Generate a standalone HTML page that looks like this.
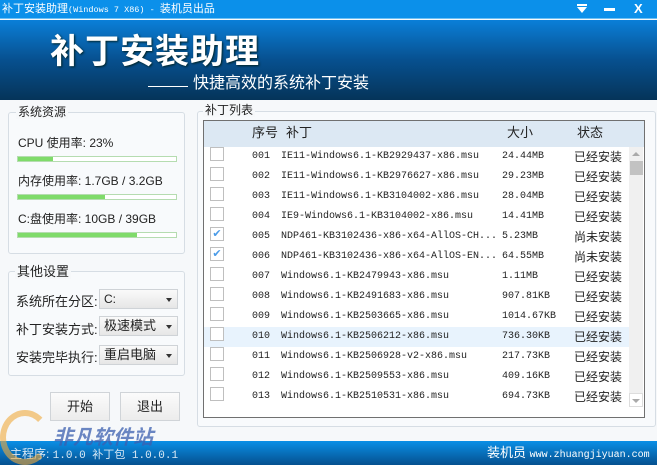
<!DOCTYPE html>
<html><head><meta charset="utf-8"><style>
*{margin:0;padding:0;box-sizing:border-box}
body{width:657px;height:465px;overflow:hidden;background:#f6f8fa;font-family:"Liberation Sans","Noto Sans CJK SC",sans-serif;font-size:12px;color:#222;position:relative}
.a{position:absolute}
.tb{left:0;top:0;width:657px;height:19px;background:#0b90ea;border-bottom:1px solid #6cc0f5;color:#fff;font-size:11px;line-height:18px;padding-left:2px;white-space:nowrap}
.ban{left:0;top:20px;width:657px;height:80px;background:linear-gradient(#0a7fd8,#07508f 50%,#053459)}
.gb{border:1px solid #d6dde4;border-radius:3px;background:#f8fafc}
.lg{background:#f6f8fa;padding:0 2px;font-size:12px;line-height:14px}
.bar{height:6px;border:1px solid #b5dcb0;background:#fff}
.bar i{display:block;height:100%;background:#7fdb6a}
.sel{width:79px;height:20px;border:1px solid #cfd3d7;background:linear-gradient(#fafafa,#e6e6e6);font-size:12px;line-height:18px;padding-left:4px}
.sel:after{content:"";position:absolute;right:5px;top:8px;border:3px solid transparent;border-top:4px solid #333}
.btn{width:60px;height:29px;border:1px solid #d0d4d8;background:linear-gradient(#fbfbfb,#ececec);text-align:center;line-height:27px;font-size:13px}
.row{left:204px;width:424px;height:20px;font-size:12px;line-height:20px}
.row span{position:absolute;top:0}
.m{font-family:"Liberation Mono",monospace;font-size:10px}
.cb{left:6px;top:3px;width:14px;height:14px;border:1px solid #bfbfbf;background:#fff}
.ck{color:#4a9be8;font-size:11px;line-height:12px;text-align:center}
</style></head><body>
<div class="a tb">补丁安装助理<span style="font-family:'Liberation Mono',monospace;font-size:8.5px">(Windows 7 X86) - </span>装机员出品</div>
<div class="a" style="left:577px;top:4px;width:10px;height:2px;background:#fff"></div>
<div class="a" style="left:577px;top:7px;border:5px solid transparent;border-top:6px solid #fff;border-bottom:0"></div>
<div class="a" style="left:604px;top:8px;width:11px;height:3px;background:#fff"></div>
<div class="a" style="left:634px;top:0;color:#fff;font-weight:bold;font-size:13px;line-height:18px">X</div>
<div class="a ban"></div>
<div class="a" style="left:50px;top:32px;color:#fff;font-size:34px;font-weight:bold;line-height:40px;letter-spacing:1px;text-shadow:1px 1px 2px #022">补丁安装助理</div>
<div class="a" style="left:148px;top:86px;width:40px;height:1px;background:#fff"></div>
<div class="a" style="left:193px;top:74px;color:#fff;font-size:16px;line-height:20px">快捷高效的系统补丁安装</div>

<div class="a gb" style="left:8px;top:112px;width:177px;height:142px"></div>
<div class="a lg" style="left:16px;top:105px">系统资源</div>
<div class="a" style="left:18px;top:134px">CPU 使用率: 23%</div>
<div class="a bar" style="left:17px;top:156px;width:160px"><i style="width:22%"></i></div>
<div class="a" style="left:18px;top:172px">内存使用率: 1.7GB / 3.2GB</div>
<div class="a bar" style="left:17px;top:194px;width:160px"><i style="width:55%"></i></div>
<div class="a" style="left:18px;top:210px">C:盘使用率: 10GB / 39GB</div>
<div class="a bar" style="left:17px;top:232px;width:160px"><i style="width:75%"></i></div>

<div class="a gb" style="left:8px;top:271px;width:177px;height:105px"></div>
<div class="a lg" style="left:15px;top:265px;font-size:13px">其他设置</div>
<div class="a" style="left:16px;top:291px;font-size:13px">系统所在分区:</div>
<div class="a sel" style="left:99px;top:289px">C:</div>
<div class="a" style="left:16px;top:319px;font-size:13px">补丁安装方式:</div>
<div class="a sel" style="left:99px;top:316px;font-size:13px">极速模式</div>
<div class="a" style="left:16px;top:347px;font-size:13px">安装完毕执行:</div>
<div class="a sel" style="left:99px;top:345px;font-size:13px">重启电脑</div>
<div class="a btn" style="left:50px;top:392px">开始</div>
<div class="a btn" style="left:120px;top:392px">退出</div>

<div class="a gb" style="left:197px;top:111px;width:459px;height:316px"></div>
<div class="a lg" style="left:203px;top:103px">补丁列表</div>
<div class="a" style="left:203px;top:120px;width:442px;height:298px;border:1px solid #707070;background:#fff"></div>
<div class="a" style="left:204px;top:121px;width:440px;height:26px;background:#dce8f3;font-size:13px;line-height:24px">
<span class="a" style="left:48px">序号</span><span class="a" style="left:82px">补丁</span><span class="a" style="left:303px">大小</span><span class="a" style="left:373px">状态</span></div>
<div class="a" style="left:629px;top:147px;width:14px;height:260px;background:#f0f0f0"></div>
<div class="a" style="left:630px;top:161px;width:13px;height:14px;background:#c2c2c2"></div>
<div class="a" style="left:632px;top:152px;border:4px solid transparent;border-bottom:4px solid #aaa;border-top:0"></div>
<div class="a" style="left:629px;top:393px;width:14px;height:14px;background:#fff;border:1px solid #ddd"></div>
<div class="a" style="left:632px;top:399px;border:4px solid transparent;border-top:4px solid #aaa;border-bottom:0"></div>
<div class="a" style="left:204px;top:327px;width:425px;height:20px;background:#e8f3fd"></div>

<div class="a row" style="top:147px"><span class="a cb"></span><span class="m" style="left:48px">001</span><span class="m" style="left:77px">IE11-Windows6.1-KB2929437-x86.msu</span><span class="m" style="left:298px">24.44MB</span><span style="left:370px">已经安装</span></div>
<div class="a row" style="top:167px"><span class="a cb"></span><span class="m" style="left:48px">002</span><span class="m" style="left:77px">IE11-Windows6.1-KB2976627-x86.msu</span><span class="m" style="left:298px">29.23MB</span><span style="left:370px">已经安装</span></div>
<div class="a row" style="top:187px"><span class="a cb"></span><span class="m" style="left:48px">003</span><span class="m" style="left:77px">IE11-Windows6.1-KB3104002-x86.msu</span><span class="m" style="left:298px">28.04MB</span><span style="left:370px">已经安装</span></div>
<div class="a row" style="top:207px"><span class="a cb"></span><span class="m" style="left:48px">004</span><span class="m" style="left:77px">IE9-Windows6.1-KB3104002-x86.msu</span><span class="m" style="left:298px">14.41MB</span><span style="left:370px">已经安装</span></div>
<div class="a row" style="top:227px"><span class="a cb ck">✔</span><span class="m" style="left:48px">005</span><span class="m" style="left:77px">NDP461-KB3102436-x86-x64-AllOS-CH...</span><span class="m" style="left:298px">5.23MB</span><span style="left:370px">尚未安装</span></div>
<div class="a row" style="top:247px"><span class="a cb ck">✔</span><span class="m" style="left:48px">006</span><span class="m" style="left:77px">NDP461-KB3102436-x86-x64-AllOS-EN...</span><span class="m" style="left:298px">64.55MB</span><span style="left:370px">尚未安装</span></div>
<div class="a row" style="top:267px"><span class="a cb"></span><span class="m" style="left:48px">007</span><span class="m" style="left:77px">Windows6.1-KB2479943-x86.msu</span><span class="m" style="left:298px">1.11MB</span><span style="left:370px">已经安装</span></div>
<div class="a row" style="top:287px"><span class="a cb"></span><span class="m" style="left:48px">008</span><span class="m" style="left:77px">Windows6.1-KB2491683-x86.msu</span><span class="m" style="left:298px">907.81KB</span><span style="left:370px">已经安装</span></div>
<div class="a row" style="top:307px"><span class="a cb"></span><span class="m" style="left:48px">009</span><span class="m" style="left:77px">Windows6.1-KB2503665-x86.msu</span><span class="m" style="left:298px">1014.67KB</span><span style="left:370px">已经安装</span></div>
<div class="a row" style="top:327px"><span class="a cb"></span><span class="m" style="left:48px">010</span><span class="m" style="left:77px">Windows6.1-KB2506212-x86.msu</span><span class="m" style="left:298px">736.30KB</span><span style="left:370px">已经安装</span></div>
<div class="a row" style="top:347px"><span class="a cb"></span><span class="m" style="left:48px">011</span><span class="m" style="left:77px">Windows6.1-KB2506928-v2-x86.msu</span><span class="m" style="left:298px">217.73KB</span><span style="left:370px">已经安装</span></div>
<div class="a row" style="top:367px"><span class="a cb"></span><span class="m" style="left:48px">012</span><span class="m" style="left:77px">Windows6.1-KB2509553-x86.msu</span><span class="m" style="left:298px">409.16KB</span><span style="left:370px">已经安装</span></div>
<div class="a row" style="top:387px"><span class="a cb"></span><span class="m" style="left:48px">013</span><span class="m" style="left:77px">Windows6.1-KB2510531-x86.msu</span><span class="m" style="left:298px">694.73KB</span><span style="left:370px">已经安装</span></div>

<div class="a" style="left:0;top:441px;width:657px;height:24px;background:linear-gradient(#0a8fe6,#05508f)"></div>
<div class="a" style="left:10px;top:446px;color:#d8e8f4;font-size:12px;line-height:16px">主程序: <span class="m" style="font-size:11px">1.0.0 补丁包 1.0.0.1</span></div>
<div class="a" style="left:487px;top:444px;color:#fff;font-size:13px;line-height:18px">装机员 <span class="m" style="font-size:10px">www.zhuangjiyuan.com</span></div>
<div class="a" style="left:0;top:410px;width:50px;height:55px;border-radius:50%;border:6px solid rgba(240,170,60,.6);border-right-color:transparent"></div>
<div class="a" style="left:53px;top:421px;color:#3b5fb0;font-size:20px;font-weight:bold;font-style:italic;opacity:.75">非凡软件站</div>
</body></html>
